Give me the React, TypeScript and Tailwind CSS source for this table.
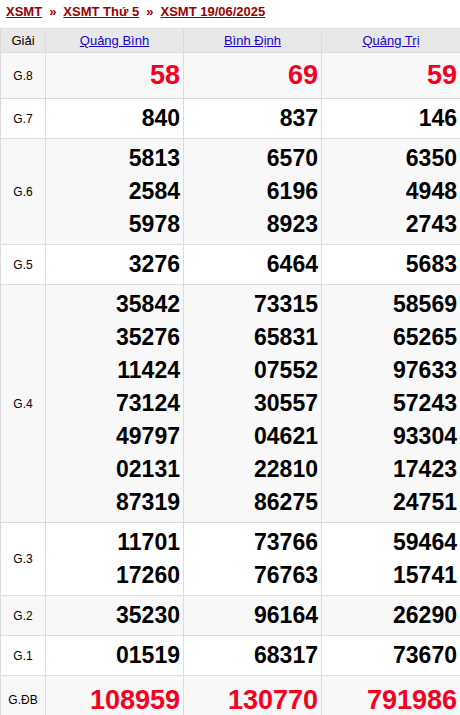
import React from 'react'

type Row = { label: string; values: string[][]; kind?: 'g8' | 'db' }

const provinces = ['Quảng Bình', 'Bình Định', 'Quảng Trị']

// kết quả theo từng giải, mỗi cột là một tỉnh
const rows: Row[] = [
  { label: 'G.8', kind: 'g8', values: [['58'], ['69'], ['59']] },
  { label: 'G.7', values: [['840'], ['837'], ['146']] },
  { label: 'G.6', values: [['5813', '2584', '5978'], ['6570', '6196', '8923'], ['6350', '4948', '2743']] },
  { label: 'G.5', values: [['3276'], ['6464'], ['5683']] },
  {
    label: 'G.4',
    values: [
      ['35842', '35276', '11424', '73124', '49797', '02131', '87319'],
      ['73315', '65831', '07552', '30557', '04621', '22810', '86275'],
      ['58569', '65265', '97633', '57243', '93304', '17423', '24751'],
    ],
  },
  { label: 'G.3', values: [['11701', '17260'], ['73766', '76763'], ['59464', '15741']] },
  { label: 'G.2', values: [['35230'], ['96164'], ['26290']] },
  { label: 'G.1', values: [['01519'], ['68317'], ['73670']] },
  { label: 'G.ĐB', kind: 'db', values: [['108959'], ['130770'], ['791986']] },
]

function NumberCell({ nums, kind }: { nums: string[]; kind?: 'g8' | 'db' }) {
  const cls =
    kind === 'g8'
      ? 'text-[27px] leading-[39px] text-[#f5001f]'
      : kind === 'db'
        ? 'text-[27px] leading-[42px] text-[#f5001f]'
        : 'text-[23px] leading-[33px] text-black'
  return (
    <td className="border border-[#dcdcdc] px-[3px] py-[3px] text-right align-middle">
      {nums.map((n) => (
        <div key={n} className={`font-bold ${cls}`}>
          {n}
        </div>
      ))}
    </td>
  )
}

export default function App() {
  return (
    <div className="bg-white w-[460px] overflow-hidden" style={{ fontFamily: '"Liberation Sans", Arial, sans-serif' }}>
      <div className="h-[28px] pl-[6px] pt-[3px] text-[13px] font-bold leading-[18px] text-[#990000]">
        <a href="#" className="underline">XSMT</a>
        <span className="mx-[7px]">»</span>
        <a href="#" className="underline">XSMT Thứ 5</a>
        <span className="mx-[7px]">»</span>
        <a href="#" className="underline">XSMT 19/06/2025</a>
      </div>
      <table className="w-[460px] table-fixed border-collapse">
        <colgroup>
          <col className="w-[45px]" />
          <col className="w-[138px]" />
          <col className="w-[138px]" />
          <col className="w-[139px]" />
        </colgroup>
        <thead>
          <tr className="bg-[#e8e8e8] h-[24px]">
            <th className="border border-[#dcdcdc] text-[13px] font-normal text-black">Giải</th>
            {provinces.map((p) => (
              <th key={p} className="border border-[#dcdcdc] text-[13px] font-normal">
                <a href="#" className="text-[#2200cc] underline">{p}</a>
              </th>
            ))}
          </tr>
        </thead>
        <tbody>
          {rows.map((r, i) => (
            <tr key={r.label} className={i % 2 === 0 ? 'bg-[#f8f8f8]' : 'bg-white'}>
              <td className="border border-[#dcdcdc] text-center text-[12px] text-black">{r.label}</td>
              {r.values.map((v, j) => (
                <NumberCell key={j} nums={v} kind={r.kind} />
              ))}
            </tr>
          ))}
        </tbody>
      </table>
    </div>
  )
}
